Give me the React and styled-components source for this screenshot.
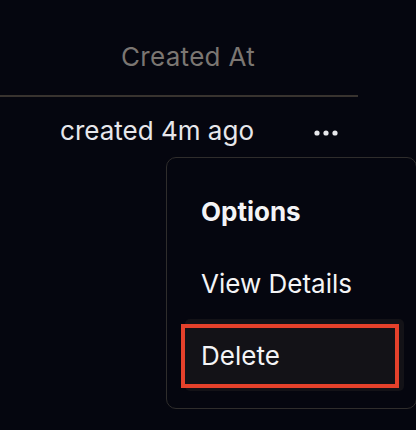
import React from "react";
import styled, { createGlobalStyle } from "styled-components";

const Global = createGlobalStyle`
  html, body { margin: 0; padding: 0; background: #05060f; }
  body { font-family: Inter, "Noto Sans", "Liberation Sans", sans-serif; -webkit-font-smoothing: antialiased; }
  #root { width: 416px; height: 430px; overflow: hidden; position: relative; }
`;

const Page = styled.div`
  position: relative;
  width: 416px;
  height: 430px;
  background: #05060f;
`;

const Table = styled.div`
  width: 358px;
  display: grid;
  grid-template-columns: 255px 103px;
`;

const HeadCell = styled.div`
  box-sizing: border-box;
  height: 97px;
  padding-top: 41px;
  border-bottom: 2px solid #38332f;
  text-align: right;
  font-size: 26px;
  line-height: 32px;
  letter-spacing: 0.3px;
  color: #7b7672;
`;

const Cell = styled.div`
  box-sizing: border-box;
  padding-top: 18px;
  padding-right: 1px;
  font-size: 26px;
  line-height: 32px;
  color: #e7e7eb;
  text-align: right;
`;

const DotsCell = styled.div`
  display: flex;
  justify-content: center;
  align-items: flex-start;
  padding-top: 32px;
  padding-left: 38px;
`;

const Menu = styled.div`
  position: absolute;
  left: 166px;
  top: 157px;
  width: 251px;
  height: 252px;
  box-sizing: border-box;
  border: 1px solid #2f2d2c;
  border-radius: 10px;
  background: #05060f;
  padding: 17px 12px 15px 18px;
  display: flex;
  flex-direction: column;
`;

const Item = styled.div`
  height: 72px;
  box-sizing: border-box;
  display: flex;
  align-items: center;
  padding-left: 16px;
  border-radius: 5px;
  font-size: 26px;
  font-weight: ${(p) => (p.$label ? 700 : 400)};
  color: #f4f4f6;
  background: ${(p) => (p.$active ? "#131217" : "transparent")};
  position: relative;
`;

const Highlight = styled.div`
  position: absolute;
  left: -4px;
  top: 5px;
  right: 5px;
  bottom: 3px;
  border: 4px solid #e5412b;
  pointer-events: none;
`;

const Dots = () => (
  <svg width="24" height="8" viewBox="0 0 24 8" style={{ display: "block" }}>
    <circle cx="3" cy="4" r="2.6" fill="#e7e7eb" />
    <circle cx="12" cy="4" r="2.6" fill="#e7e7eb" />
    <circle cx="21" cy="4" r="2.6" fill="#e7e7eb" />
  </svg>
);

export default function App() {
  return (
    <Page>
      <Global />
      <Table>
        <HeadCell>Created At</HeadCell>
        <HeadCell />
        <Cell>created 4m ago</Cell>
        <DotsCell>
          <Dots />
        </DotsCell>
      </Table>
      <Menu>
        <Item $label>Options</Item>
        <Item>View Details</Item>
        <Item $active>
          Delete
          <Highlight />
        </Item>
      </Menu>
    </Page>
  );
}
